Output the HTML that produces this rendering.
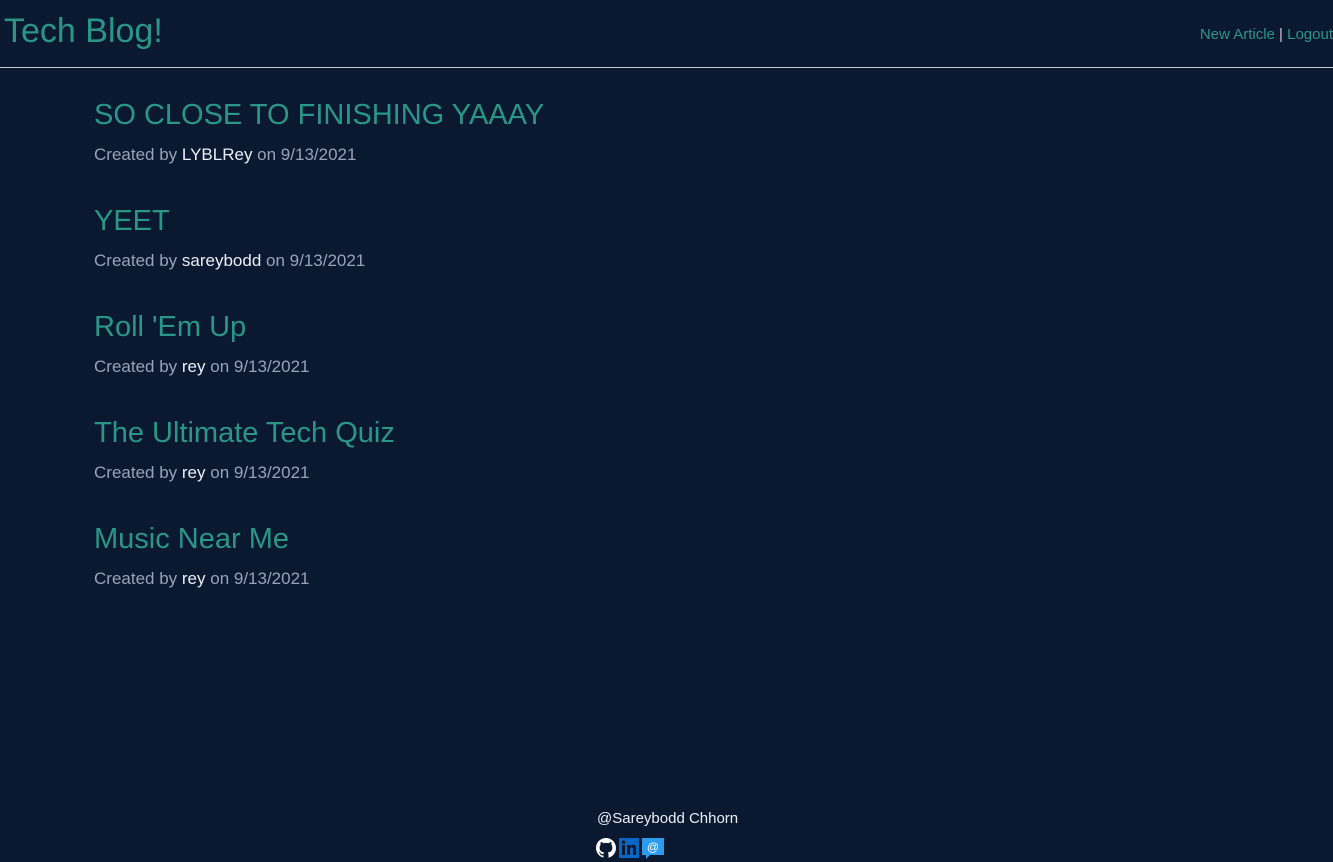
<!DOCTYPE html>
<html><head><style>
body{margin:0;background:#0a1930;font-family:"Liberation Sans",sans-serif;width:1333px;height:862px;overflow:hidden;position:relative}
.hdr{height:67px;border-bottom:1px solid #c8ccd2;position:relative}
.logo{position:absolute;left:4px;top:12px;font-size:34px;color:#2a9688}
.nav{position:absolute;right:0;top:26px;font-size:15px;color:#2a9688}
.nav span{color:#c8ccd2}
.post{position:absolute;left:94px}
.post h2{margin:0;font-weight:normal;font-size:29px;color:#2a9688;line-height:36px}
.post p{margin:12px 0 0;font-size:17px;color:#98a2b5}
.post b{font-weight:normal;color:#e8eef8}
.foot{position:absolute;left:597px;top:810px;font-size:15px;color:#e8eef8}
.icons{position:absolute;left:596px;top:838px;display:flex;gap:3px}
</style></head><body>
<div class="hdr"><div class="logo">Tech Blog!</div><div class="nav">New Article <span>|</span> Logout</div></div>
<div class="post" style="top:97px"><h2>SO CLOSE TO FINISHING YAAAY</h2><p>Created by <b>LYBLRey</b> on 9/13/2021</p></div>
<div class="post" style="top:203px"><h2>YEET</h2><p>Created by <b>sareybodd</b> on 9/13/2021</p></div>
<div class="post" style="top:309px"><h2>Roll 'Em Up</h2><p>Created by <b>rey</b> on 9/13/2021</p></div>
<div class="post" style="top:415px"><h2>The Ultimate Tech Quiz</h2><p>Created by <b>rey</b> on 9/13/2021</p></div>
<div class="post" style="top:521px"><h2>Music Near Me</h2><p>Created by <b>rey</b> on 9/13/2021</p></div>
<div class="foot">@Sareybodd Chhorn</div>
<div class="icons">
<svg width="20" height="20" viewBox="0 0 16 16"><path fill="#fff" d="M8 0C3.58 0 0 3.58 0 8c0 3.54 2.29 6.530 5.47 7.59.4.07.55-.17.55-.38v-1.33c-2.23.48-2.7-1.070-2.7-1.070-.36-.92-.89-1.17-.89-1.17-.73-.5.05-.49.05-.49.8.06 1.23.83 1.23.83.71 1.22 1.87.87 2.33.66.07-.52.28-.87.51-1.070-1.78-.2-3.65-.89-3.65-3.95 0-.87.31-1.59.82-2.15-.08-.2-.36-1.020.08-2.12 0 0 .67-.21 2.2.82a7.6 7.6 0 0 1 4 0c1.53-1.04 2.2-.82 2.2-.82.44 1.1.16 1.92.08 2.12.51.56.82 1.27.82 2.15 0 3.07-1.87 3.75-3.65 3.95.29.25.54.73.54 1.48v2.2c0 .21.15.46.55.38A8 8 0 0 0 16 8c0-4.42-3.58-8-8-8z"/></svg>
<svg width="20" height="20" viewBox="0 0 20 20"><rect width="20" height="20" fill="#0a66c2"/><rect x="3" y="7" width="3" height="10" fill="#0a1930"/><circle cx="4.5" cy="4.2" r="1.7" fill="#0a1930"/><path d="M8 7h3v1.5c.6-1 1.6-1.7 3-1.7 2.3 0 3 1.5 3 3.7V17h-3v-6c0-1-.4-1.6-1.3-1.6-1 0-1.7.7-1.7 1.8V17H8z" fill="#0a1930"/></svg>
<svg width="22" height="22" viewBox="0 0 22 22"><path d="M0 0h22v17H8l-4 4v-4H0z" fill="#2b9cf0"/><text x="11" y="13" font-size="12" fill="#fff" text-anchor="middle" font-family="Liberation Sans">@</text></svg>
</div>
</body></html>
